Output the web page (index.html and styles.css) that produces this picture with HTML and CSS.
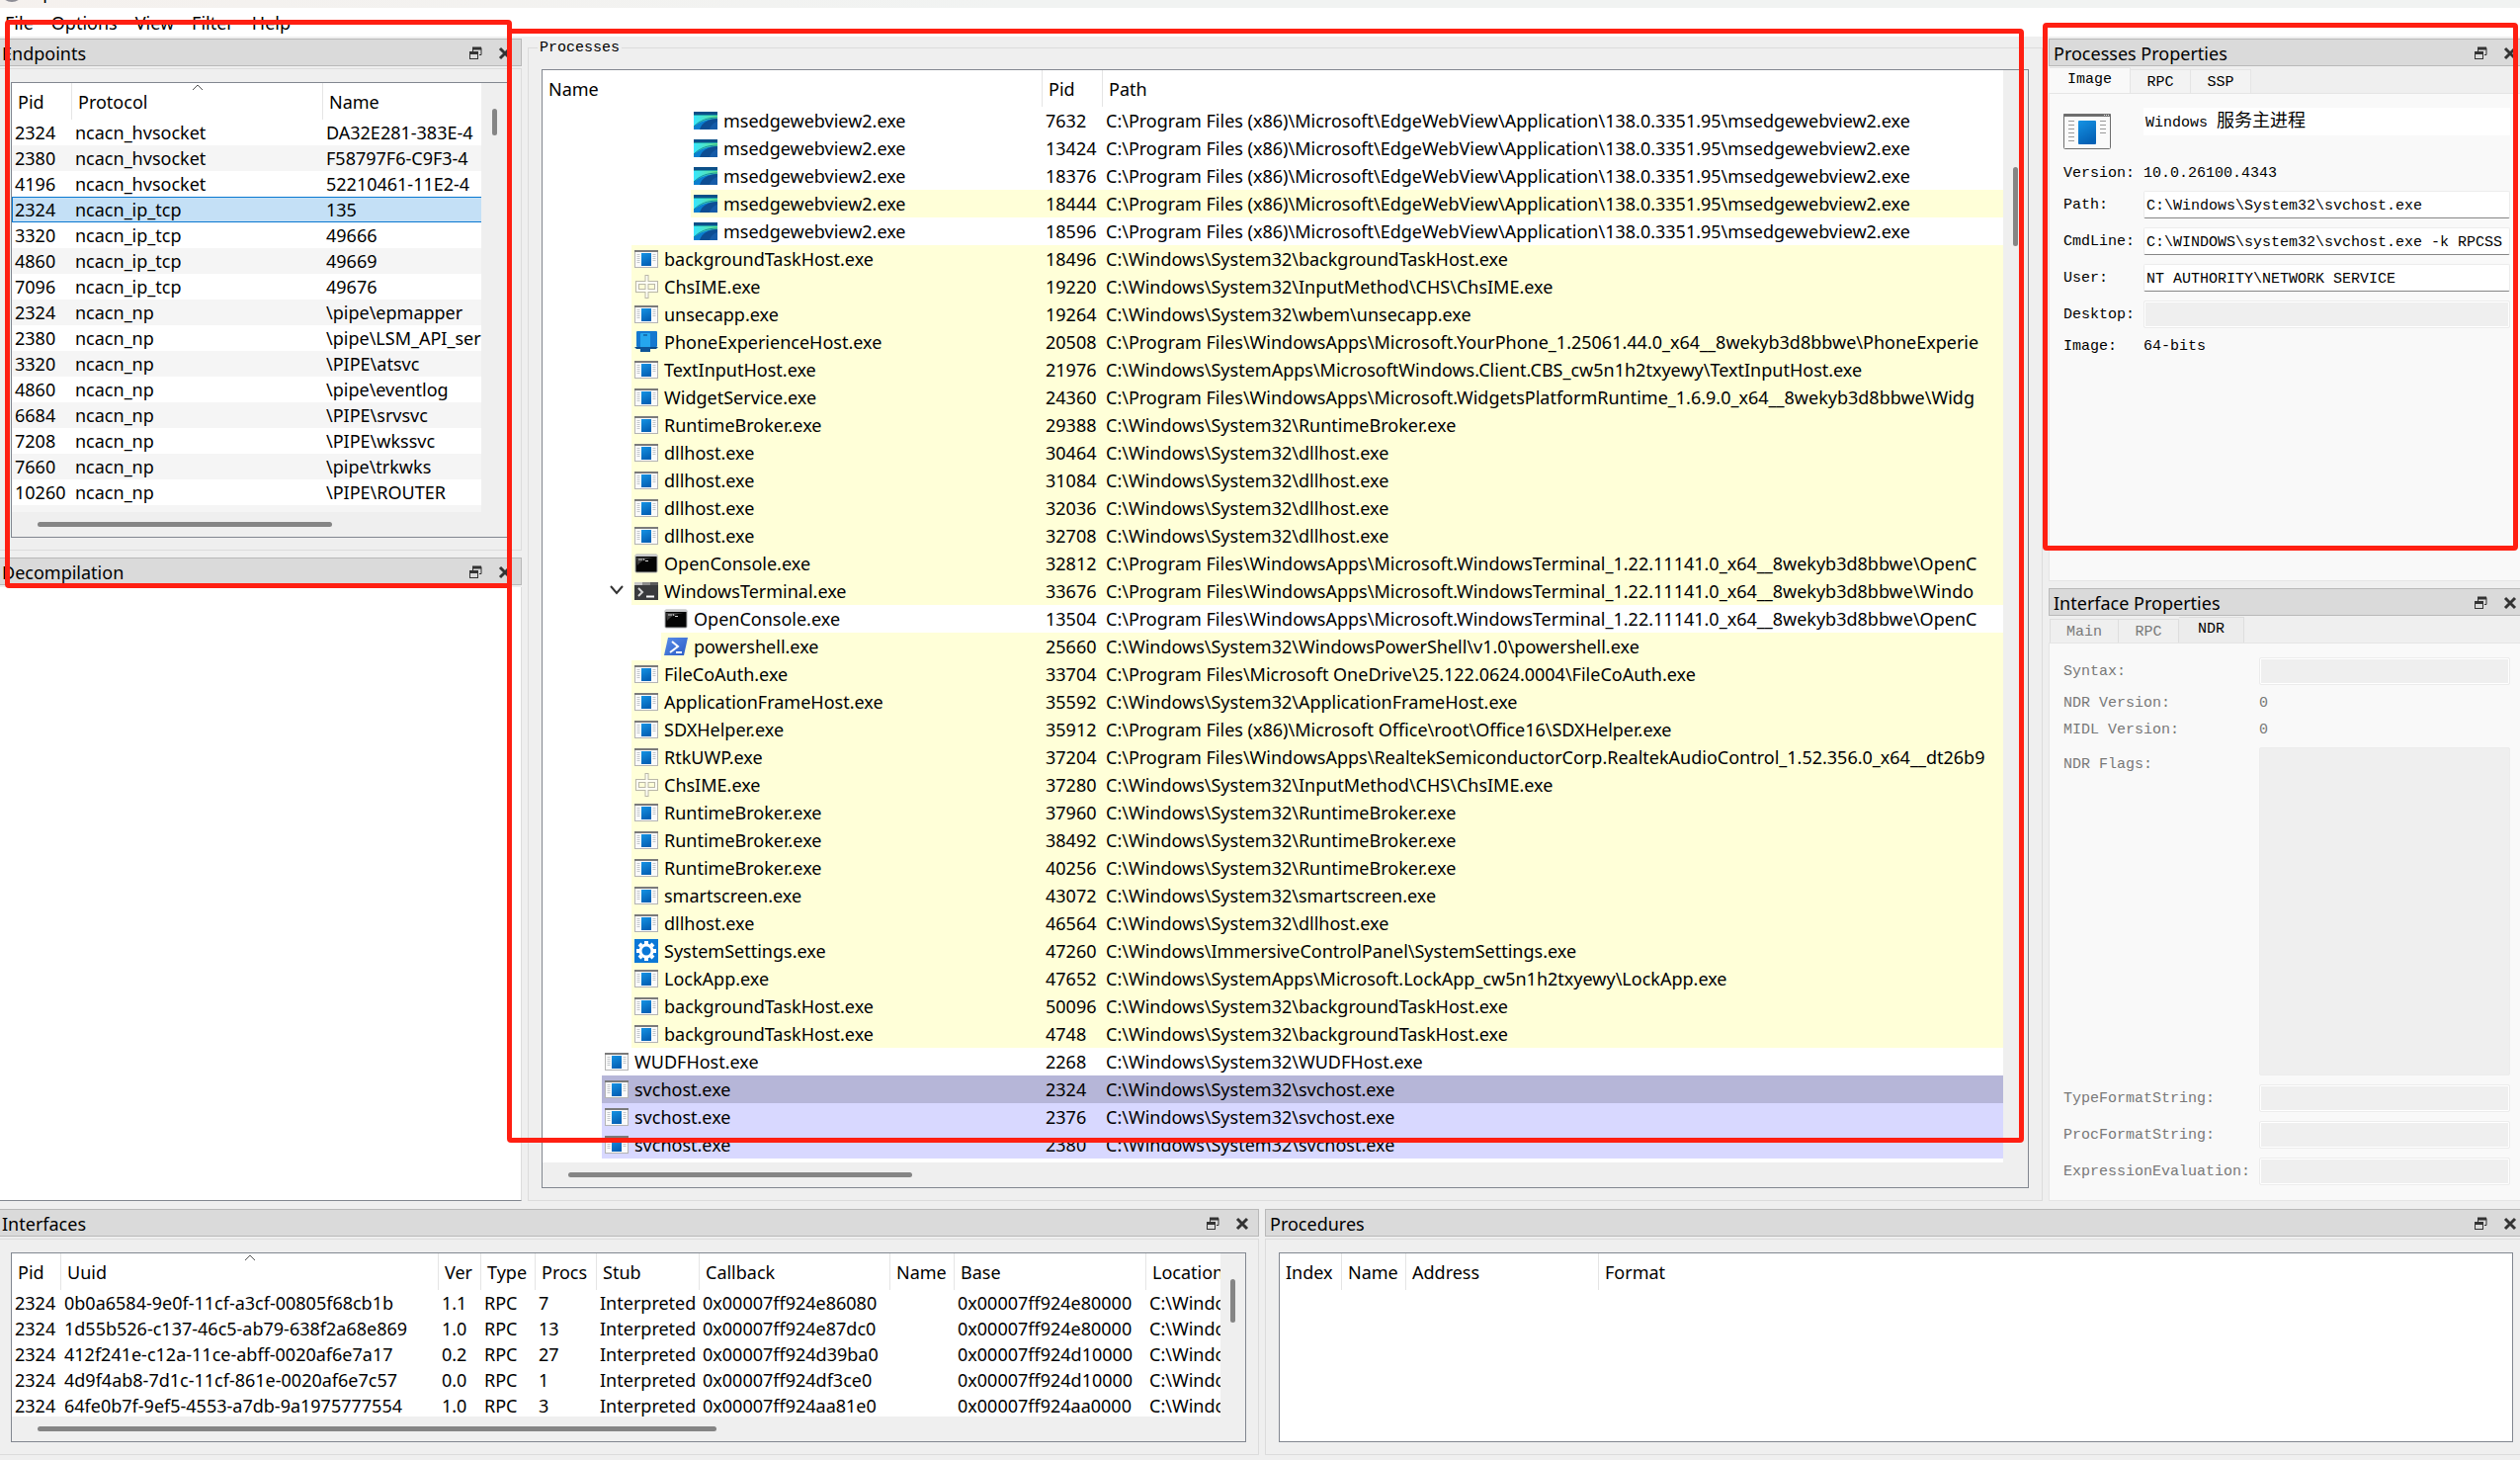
FILE: index.html
```html
<!DOCTYPE html>
<html lang="en">
<head>
<meta charset="utf-8">
<title>RpcView</title>
<link rel="stylesheet" href="styles.css">
</head>
<body>
<svg class="sprite" aria-hidden="true">
  <defs>
    <linearGradient id="g-blue" x1="0" y1="0" x2="0.4" y2="1"><stop offset="0" stop-color="#1593e4"/><stop offset="1" stop-color="#0562b6"/></linearGradient>
    <linearGradient id="g-sky" x1="0" y1="0" x2="1" y2="0"><stop offset="0" stop-color="#38e6ff"/><stop offset="1" stop-color="#62e08a"/></linearGradient>
    <linearGradient id="g-ps" x1="0" y1="0" x2="1" y2="1"><stop offset="0" stop-color="#5a8eea"/><stop offset="1" stop-color="#2a5bc4"/></linearGradient>
  </defs>
  <symbol id="i-app" viewBox="0 0 24 24">
    <rect x="0.5" y="3.5" width="23" height="17" fill="#fafafa" stroke="#b4b4b4"/>
    <path d="M0 4h24" stroke="#7a7a7a" stroke-width="2"/>
    <path d="M2.500 7.500h3M2.500 9.500h3M2.500 11.500h3M2.500 13.500h3M2.500 15.500h3M18.500 7.500h3M18.500 9.500h3M18.500 11.500h3M18.500 13.500h3" stroke="#c4c8cc"/>
    <rect x="7" y="6" width="10" height="13" fill="url(#g-blue)"/>
  </symbol>
  <symbol id="i-app-big" viewBox="0 0 48 48">
    <rect x="0.500" y="6.500" width="47" height="35" rx="1" fill="#fafafa" stroke="#6e6e6e"/>
    <rect y="6" width="48" height="3" rx="1" fill="#6e6e6e"/>
    <path d="M41 7.500h1M43 7.500h1M45 7.500h1" stroke="#e8e8e8"/>
    <path d="M5 13.500h6M5 17.500h6M5 21.500h6M5 25.500h6M5 29.500h6M5 33.500h6M37 13.500h6M37 17.500h6M37 21.500h6M37 25.500h6" stroke="#9a9a9a"/>
    <rect x="15" y="13" width="18" height="24" rx="1" fill="url(#g-blue)"/>
  </symbol>
  <symbol id="i-edge" viewBox="0 0 24 24">
    <rect y="3" width="24" height="18" fill="#0a7fd0"/>
    <rect y="3" width="24" height="3" fill="#0b4f88"/>
    <path d="M0 6h24v4C14 10 6 13 0 18z" fill="url(#g-sky)"/>
    <path d="M0 6h24v1H0z" fill="#1da0a8"/>
    <path d="M6 21C8 14 15 10 24 10v11z" fill="#0d4d93"/>
    <path d="M0 18C6 12 14 9 24 9" fill="none" stroke="#128a9c"/>
    <path d="M16 21c1-4 4-7 8-8v8z" fill="#155ba8"/>
  </symbol>
  <symbol id="i-ime" viewBox="0 0 24 24">
    <path d="M12.500 0v24M3 8h19v8H3z" fill="none" stroke="#b9b7a8" stroke-width="4"/>
    <path d="M12.500 1v22M3 8h19v8H3z" fill="none" stroke="#fffff4" stroke-width="2"/>
  </symbol>
  <symbol id="i-phone" viewBox="0 0 24 24">
    <rect x="2" y="1" width="21" height="16" rx="1" fill="#1478cf"/>
    <path d="M0 17h24l-2 2H2z" fill="#0b4a86"/>
    <rect x="6" y="3" width="10" height="19" rx="1" fill="#25a7ee"/>
    <rect x="6" y="17" width="10" height="5" fill="#0d5598"/>
    <path d="M9 5h4" stroke="#083f78" stroke-width="1"/>
  </symbol>
  <symbol id="i-console" viewBox="0 0 24 24">
    <rect x="1" y="3" width="22" height="18" rx="1" fill="#050505" stroke="#a9aaac"/>
    <path d="M1 4h22" stroke="#c9cacc" stroke-width="2"/>
    <path d="M3 14C8 8 15 6 22 6H2z" fill="#3b3b3b"/>
    <path d="M4 8h2M7 7v2M9 7l1 2M11 9.500h3" stroke="#d8d8d8"/>
  </symbol>
  <symbol id="i-terminal" viewBox="0 0 24 24">
    <rect y="3" width="24" height="18" fill="#3a3b3d"/>
    <rect y="3" width="8" height="3" fill="#c8c8c8"/><rect x="8" y="3" width="8" height="3" fill="#8b8b8b"/><rect x="16" y="3" width="8" height="3" fill="#5c5c5c"/>
    <path d="M4 9l4 4-4 4" fill="none" stroke="#d6d6d6" stroke-width="2"/>
    <path d="M12 17.500h8" stroke="#fff" stroke-width="2"/>
  </symbol>
  <symbol id="i-ps" viewBox="0 0 24 24">
    <path d="M4 3h20l-4 18H0z" fill="url(#g-ps)"/>
    <path d="M8 7l6 5-8 6M12 18h6" fill="none" stroke="#fff" stroke-width="2"/>
  </symbol>
  <symbol id="i-gear" viewBox="0 0 24 24">
    <rect width="24" height="24" fill="#0a78d7"/>
    <circle cx="12" cy="12" r="6" fill="none" stroke="#fff" stroke-width="3"/>
    <path d="M12 2v3M12 19v3M2 12h3M19 12h3M5 5l2 2M17 17l2 2M5 19l2-2M17 7l2-2" stroke="#fff" stroke-width="4"/>
  </symbol>
  <symbol id="i-float" viewBox="0 0 14 14">
    <path d="M4 1.500h9v7h-2" fill="none" stroke="#333"/><path d="M4 2h9" stroke="#333" stroke-width="3"/><path d="M4.500 1v4" stroke="#333"/>
    <rect x="1.500" y="5.500" width="8" height="7" fill="#dadada" stroke="#333"/><path d="M1 6.500h9" stroke="#333" stroke-width="3"/>
  </symbol>
  <symbol id="i-close" viewBox="0 0 14 14"><path d="M2 2l10 10M12 2L2 12" stroke="#333" stroke-width="3"/></symbol>
  <symbol id="i-sort" viewBox="0 0 12 7"><path d="M1 6l5-5 5 5" fill="none" stroke="#555"/></symbol>
  <symbol id="i-chevron" viewBox="0 0 14 10"><path d="M1 1l6 7 6-7" fill="none" stroke="#333" stroke-width="2"/></symbol>
</svg>

<header class="titlebar"><span class="titlebar-icon"></span><span class="titlebar-text">RpcView</span></header>
<nav class="menu">
  <button>File</button><button>Options</button><button>View</button><button>Filter</button><button>Help</button>
</nav>

<main class="workspace">
  <div class="column">
    <section class="dock">
      <header class="dock-title"><h2>Endpoints</h2><button aria-label="Float"><svg><use href="#i-float"/></svg></button><button aria-label="Close"><svg><use href="#i-close"/></svg></button></header>
      <div class="frame">
        <div class="grid-view endpoints">
          <div class="viewport">
            <table class="striped">
              <colgroup><col class="c-pid"><col class="c-protocol"><col></colgroup>
              <thead><tr><th>Pid</th><th>Protocol<svg class="sort"><use href="#i-sort"/></svg></th><th>Name</th></tr></thead>
              <tbody>
                <tr><td>2324</td><td>ncacn_hvsocket</td><td>DA32E281-383E-4</td></tr>
                <tr><td>2380</td><td>ncacn_hvsocket</td><td>F58797F6-C9F3-4</td></tr>
                <tr><td>4196</td><td>ncacn_hvsocket</td><td>52210461-11E2-4</td></tr>
                <tr class="selected"><td>2324</td><td>ncacn_ip_tcp</td><td>135</td></tr>
                <tr><td>3320</td><td>ncacn_ip_tcp</td><td>49666</td></tr>
                <tr><td>4860</td><td>ncacn_ip_tcp</td><td>49669</td></tr>
                <tr><td>7096</td><td>ncacn_ip_tcp</td><td>49676</td></tr>
                <tr><td>2324</td><td>ncacn_np</td><td>\pipe\epmapper</td></tr>
                <tr><td>2380</td><td>ncacn_np</td><td>\pipe\LSM_API_ser</td></tr>
                <tr><td>3320</td><td>ncacn_np</td><td>\PIPE\atsvc</td></tr>
                <tr><td>4860</td><td>ncacn_np</td><td>\pipe\eventlog</td></tr>
                <tr><td>6684</td><td>ncacn_np</td><td>\PIPE\srvsvc</td></tr>
                <tr><td>7208</td><td>ncacn_np</td><td>\PIPE\wkssvc</td></tr>
                <tr><td>7660</td><td>ncacn_np</td><td>\pipe\trkwks</td></tr>
                <tr><td>10260</td><td>ncacn_np</td><td>\PIPE\ROUTER</td></tr>
                <tr><td></td><td></td><td></td></tr>
              </tbody>
            </table>
          </div>
          <div class="vscroll"><span class="thumb"></span></div>
          <div class="hscroll"><span class="thumb"></span></div>
        </div>
      </div>
    </section>
    <section class="dock grow">
      <header class="dock-title"><h2>Decompilation</h2><button aria-label="Float"><svg><use href="#i-float"/></svg></button><button aria-label="Close"><svg><use href="#i-close"/></svg></button></header>
      <div class="source"></div>
    </section>
  </div>

  <fieldset class="group">
    <legend>Processes</legend>
    <div class="grid-view processes">
      <div class="viewport">
        <table class="tree">
          <colgroup><col class="c-name"><col class="c-pid5"><col></colgroup>
          <thead><tr><th>Name</th><th>Pid</th><th>Path</th></tr></thead>
          <tbody>
            <tr><td class="l3"><div class="proc"><svg><use href="#i-edge"/></svg>msedgewebview2.exe</div></td><td>7632</td><td>C:\Program Files (x86)\Microsoft\EdgeWebView\Application\138.0.3351.95\msedgewebview2.exe</td></tr>
            <tr><td class="l3"><div class="proc"><svg><use href="#i-edge"/></svg>msedgewebview2.exe</div></td><td>13424</td><td>C:\Program Files (x86)\Microsoft\EdgeWebView\Application\138.0.3351.95\msedgewebview2.exe</td></tr>
            <tr><td class="l3"><div class="proc"><svg><use href="#i-edge"/></svg>msedgewebview2.exe</div></td><td>18376</td><td>C:\Program Files (x86)\Microsoft\EdgeWebView\Application\138.0.3351.95\msedgewebview2.exe</td></tr>
            <tr class="own"><td class="l3"><div class="proc"><svg><use href="#i-edge"/></svg>msedgewebview2.exe</div></td><td>18444</td><td>C:\Program Files (x86)\Microsoft\EdgeWebView\Application\138.0.3351.95\msedgewebview2.exe</td></tr>
            <tr><td class="l3"><div class="proc"><svg><use href="#i-edge"/></svg>msedgewebview2.exe</div></td><td>18596</td><td>C:\Program Files (x86)\Microsoft\EdgeWebView\Application\138.0.3351.95\msedgewebview2.exe</td></tr>
            <tr class="own"><td class="l1"><div class="proc"><svg><use href="#i-app"/></svg>backgroundTaskHost.exe</div></td><td>18496</td><td>C:\Windows\System32\backgroundTaskHost.exe</td></tr>
            <tr class="own"><td class="l1"><div class="proc"><svg><use href="#i-ime"/></svg>ChsIME.exe</div></td><td>19220</td><td>C:\Windows\System32\InputMethod\CHS\ChsIME.exe</td></tr>
            <tr class="own"><td class="l1"><div class="proc"><svg><use href="#i-app"/></svg>unsecapp.exe</div></td><td>19264</td><td>C:\Windows\System32\wbem\unsecapp.exe</td></tr>
            <tr class="own"><td class="l1"><div class="proc"><svg><use href="#i-phone"/></svg>PhoneExperienceHost.exe</div></td><td>20508</td><td>C:\Program Files\WindowsApps\Microsoft.YourPhone_1.25061.44.0_x64__8wekyb3d8bbwe\PhoneExperie</td></tr>
            <tr class="own"><td class="l1"><div class="proc"><svg><use href="#i-app"/></svg>TextInputHost.exe</div></td><td>21976</td><td>C:\Windows\SystemApps\MicrosoftWindows.Client.CBS_cw5n1h2txyewy\TextInputHost.exe</td></tr>
            <tr class="own"><td class="l1"><div class="proc"><svg><use href="#i-app"/></svg>WidgetService.exe</div></td><td>24360</td><td>C:\Program Files\WindowsApps\Microsoft.WidgetsPlatformRuntime_1.6.9.0_x64__8wekyb3d8bbwe\Widg</td></tr>
            <tr class="own"><td class="l1"><div class="proc"><svg><use href="#i-app"/></svg>RuntimeBroker.exe</div></td><td>29388</td><td>C:\Windows\System32\RuntimeBroker.exe</td></tr>
            <tr class="own"><td class="l1"><div class="proc"><svg><use href="#i-app"/></svg>dllhost.exe</div></td><td>30464</td><td>C:\Windows\System32\dllhost.exe</td></tr>
            <tr class="own"><td class="l1"><div class="proc"><svg><use href="#i-app"/></svg>dllhost.exe</div></td><td>31084</td><td>C:\Windows\System32\dllhost.exe</td></tr>
            <tr class="own"><td class="l1"><div class="proc"><svg><use href="#i-app"/></svg>dllhost.exe</div></td><td>32036</td><td>C:\Windows\System32\dllhost.exe</td></tr>
            <tr class="own"><td class="l1"><div class="proc"><svg><use href="#i-app"/></svg>dllhost.exe</div></td><td>32708</td><td>C:\Windows\System32\dllhost.exe</td></tr>
            <tr class="own"><td class="l1"><div class="proc"><svg><use href="#i-console"/></svg>OpenConsole.exe</div></td><td>32812</td><td>C:\Program Files\WindowsApps\Microsoft.WindowsTerminal_1.22.11141.0_x64__8wekyb3d8bbwe\OpenC</td></tr>
            <tr class="own"><td class="l1"><div class="proc"><button class="expander" aria-label="Collapse"><svg><use href="#i-chevron"/></svg></button><svg><use href="#i-terminal"/></svg>WindowsTerminal.exe</div></td><td>33676</td><td>C:\Program Files\WindowsApps\Microsoft.WindowsTerminal_1.22.11141.0_x64__8wekyb3d8bbwe\Windo</td></tr>
            <tr><td class="l2"><div class="proc"><svg><use href="#i-console"/></svg>OpenConsole.exe</div></td><td>13504</td><td>C:\Program Files\WindowsApps\Microsoft.WindowsTerminal_1.22.11141.0_x64__8wekyb3d8bbwe\OpenC</td></tr>
            <tr class="own"><td class="l2"><div class="proc"><svg><use href="#i-ps"/></svg>powershell.exe</div></td><td>25660</td><td>C:\Windows\System32\WindowsPowerShell\v1.0\powershell.exe</td></tr>
            <tr class="own"><td class="l1"><div class="proc"><svg><use href="#i-app"/></svg>FileCoAuth.exe</div></td><td>33704</td><td>C:\Program Files\Microsoft OneDrive\25.122.0624.0004\FileCoAuth.exe</td></tr>
            <tr class="own"><td class="l1"><div class="proc"><svg><use href="#i-app"/></svg>ApplicationFrameHost.exe</div></td><td>35592</td><td>C:\Windows\System32\ApplicationFrameHost.exe</td></tr>
            <tr class="own"><td class="l1"><div class="proc"><svg><use href="#i-app"/></svg>SDXHelper.exe</div></td><td>35912</td><td>C:\Program Files (x86)\Microsoft Office\root\Office16\SDXHelper.exe</td></tr>
            <tr class="own"><td class="l1"><div class="proc"><svg><use href="#i-app"/></svg>RtkUWP.exe</div></td><td>37204</td><td>C:\Program Files\WindowsApps\RealtekSemiconductorCorp.RealtekAudioControl_1.52.356.0_x64__dt26b9</td></tr>
            <tr class="own"><td class="l1"><div class="proc"><svg><use href="#i-ime"/></svg>ChsIME.exe</div></td><td>37280</td><td>C:\Windows\System32\InputMethod\CHS\ChsIME.exe</td></tr>
            <tr class="own"><td class="l1"><div class="proc"><svg><use href="#i-app"/></svg>RuntimeBroker.exe</div></td><td>37960</td><td>C:\Windows\System32\RuntimeBroker.exe</td></tr>
            <tr class="own"><td class="l1"><div class="proc"><svg><use href="#i-app"/></svg>RuntimeBroker.exe</div></td><td>38492</td><td>C:\Windows\System32\RuntimeBroker.exe</td></tr>
            <tr class="own"><td class="l1"><div class="proc"><svg><use href="#i-app"/></svg>RuntimeBroker.exe</div></td><td>40256</td><td>C:\Windows\System32\RuntimeBroker.exe</td></tr>
            <tr class="own"><td class="l1"><div class="proc"><svg><use href="#i-app"/></svg>smartscreen.exe</div></td><td>43072</td><td>C:\Windows\System32\smartscreen.exe</td></tr>
            <tr class="own"><td class="l1"><div class="proc"><svg><use href="#i-app"/></svg>dllhost.exe</div></td><td>46564</td><td>C:\Windows\System32\dllhost.exe</td></tr>
            <tr class="own"><td class="l1"><div class="proc"><svg><use href="#i-gear"/></svg>SystemSettings.exe</div></td><td>47260</td><td>C:\Windows\ImmersiveControlPanel\SystemSettings.exe</td></tr>
            <tr class="own"><td class="l1"><div class="proc"><svg><use href="#i-app"/></svg>LockApp.exe</div></td><td>47652</td><td>C:\Windows\SystemApps\Microsoft.LockApp_cw5n1h2txyewy\LockApp.exe</td></tr>
            <tr class="own"><td class="l1"><div class="proc"><svg><use href="#i-app"/></svg>backgroundTaskHost.exe</div></td><td>50096</td><td>C:\Windows\System32\backgroundTaskHost.exe</td></tr>
            <tr class="own"><td class="l1"><div class="proc"><svg><use href="#i-app"/></svg>backgroundTaskHost.exe</div></td><td>4748</td><td>C:\Windows\System32\backgroundTaskHost.exe</td></tr>
            <tr><td class="l0"><div class="proc"><svg><use href="#i-app"/></svg>WUDFHost.exe</div></td><td>2268</td><td>C:\Windows\System32\WUDFHost.exe</td></tr>
            <tr class="service current"><td class="l0"><div class="proc"><svg><use href="#i-app"/></svg>svchost.exe</div></td><td>2324</td><td>C:\Windows\System32\svchost.exe</td></tr>
            <tr class="service"><td class="l0"><div class="proc"><svg><use href="#i-app"/></svg>svchost.exe</div></td><td>2376</td><td>C:\Windows\System32\svchost.exe</td></tr>
            <tr class="service"><td class="l0"><div class="proc"><svg><use href="#i-app"/></svg>svchost.exe</div></td><td>2380</td><td>C:\Windows\System32\svchost.exe</td></tr>
          </tbody>
        </table>
      </div>
      <div class="vscroll"><span class="thumb"></span></div>
      <div class="hscroll"><span class="thumb"></span></div>
    </div>
  </fieldset>

  <div class="column">
    <section class="dock edge properties">
      <header class="dock-title"><h2>Processes Properties</h2><button aria-label="Float"><svg><use href="#i-float"/></svg></button><button aria-label="Close"><svg><use href="#i-close"/></svg></button></header>
      <div class="tabs" role="tablist"><button role="tab" class="active wide" aria-selected="true">Image</button><button role="tab">RPC</button><button role="tab">SSP</button></div>
      <div class="pane form">
        <svg class="big-icon"><use href="#i-app-big"/></svg><p class="description">Windows <span lang="zh-CN">服务主进程</span></p>
        <span class="line">Version:</span><span class="line">10.0.26100.4343</span>
        <label for="path">Path:</label><input id="path" readonly value="C:\Windows\System32\svchost.exe">
        <label for="cmd">CmdLine:</label><input id="cmd" readonly value="C:\WINDOWS\system32\svchost.exe -k RPCSS">
        <label for="user">User:</label><input id="user" readonly value="NT AUTHORITY\NETWORK SERVICE">
        <label for="desktop">Desktop:</label><input id="desktop" disabled>
        <span class="line">Image:</span><span class="line">64-bits</span>
      </div>
    </section>
    <section class="dock edge grow">
      <header class="dock-title"><h2>Interface Properties</h2><button aria-label="Float"><svg><use href="#i-float"/></svg></button><button aria-label="Close"><svg><use href="#i-close"/></svg></button></header>
      <div class="tabs off" role="tablist"><button role="tab" class="mid">Main</button><button role="tab">RPC</button><button role="tab" class="active" aria-selected="true">NDR</button></div>
      <div class="pane form ndr">
        <label for="syntax">Syntax:</label><input id="syntax" disabled>
        <span class="line">NDR Version:</span><span class="line">0</span>
        <span class="line">MIDL Version:</span><span class="line">0</span>
        <label for="flags" class="top">NDR Flags:</label><textarea id="flags" disabled></textarea>
        <label for="tfs">TypeFormatString:</label><input id="tfs" disabled>
        <label for="pfs">ProcFormatString:</label><input id="pfs" disabled>
        <label for="eval">ExpressionEvaluation:</label><input id="eval" disabled>
      </div>
    </section>
  </div>
</main>

<div class="lower">
  <section class="dock">
    <header class="dock-title"><h2>Interfaces</h2><button aria-label="Float"><svg><use href="#i-float"/></svg></button><button aria-label="Close"><svg><use href="#i-close"/></svg></button></header>
    <div class="frame">
      <div class="grid-view interfaces">
        <div class="viewport">
          <table>
            <colgroup><col class="c-pid4"><col class="c-uuid"><col class="c-ver"><col class="c-type"><col class="c-procs"><col class="c-stub"><col class="c-addr"><col class="c-short"><col class="c-base"><col></colgroup>
            <thead><tr><th>Pid</th><th>Uuid<svg class="sort"><use href="#i-sort"/></svg></th><th>Ver</th><th>Type</th><th>Procs</th><th>Stub</th><th>Callback</th><th>Name</th><th>Base</th><th>Location</th></tr></thead>
            <tbody>
              <tr><td>2324</td><td>0b0a6584-9e0f-11cf-a3cf-00805f68cb1b</td><td>1.1</td><td>RPC</td><td>7</td><td>Interpreted</td><td>0x00007ff924e86080</td><td></td><td>0x00007ff924e80000</td><td>C:\Windo</td></tr>
              <tr><td>2324</td><td>1d55b526-c137-46c5-ab79-638f2a68e869</td><td>1.0</td><td>RPC</td><td>13</td><td>Interpreted</td><td>0x00007ff924e87dc0</td><td></td><td>0x00007ff924e80000</td><td>C:\Windo</td></tr>
              <tr><td>2324</td><td>412f241e-c12a-11ce-abff-0020af6e7a17</td><td>0.2</td><td>RPC</td><td>27</td><td>Interpreted</td><td>0x00007ff924d39ba0</td><td></td><td>0x00007ff924d10000</td><td>C:\Windo</td></tr>
              <tr><td>2324</td><td>4d9f4ab8-7d1c-11cf-861e-0020af6e7c57</td><td>0.0</td><td>RPC</td><td>1</td><td>Interpreted</td><td>0x00007ff924df3ce0</td><td></td><td>0x00007ff924d10000</td><td>C:\Windo</td></tr>
              <tr><td>2324</td><td>64fe0b7f-9ef5-4553-a7db-9a1975777554</td><td>1.0</td><td>RPC</td><td>3</td><td>Interpreted</td><td>0x00007ff924aa81e0</td><td></td><td>0x00007ff924aa0000</td><td>C:\Windo</td></tr>
            </tbody>
          </table>
        </div>
        <div class="vscroll"><span class="thumb"></span></div>
        <div class="hscroll"><span class="thumb"></span></div>
      </div>
    </div>
  </section>
  <section class="dock edge">
    <header class="dock-title"><h2>Procedures</h2><button aria-label="Float"><svg><use href="#i-float"/></svg></button><button aria-label="Close"><svg><use href="#i-close"/></svg></button></header>
    <div class="frame">
      <div class="grid-view procedures">
        <table>
          <colgroup><col class="c-index"><col class="c-short"><col class="c-address"><col></colgroup>
          <thead><tr><th>Index</th><th>Name</th><th>Address</th><th>Format</th></tr></thead>
        </table>
      </div>
    </div>
  </section>
</div>

<div class="mark mark-endpoints"></div>
<div class="mark mark-processes"></div>
<div class="mark mark-properties"></div>
</body>
</html>
```

FILE: styles.css
```css
* { box-sizing: border-box; }

body {
  margin: 0;
  position: relative;
  min-height: 100vh;
  overflow-x: hidden;
  background: #efefef;
  color: #000;
  font: 18px/24px "Noto Sans", "Open Sans", sans-serif;
}

button, input, textarea { font: inherit; color: inherit; }
h2, p { margin: 0; font: inherit; }
.sprite { position: absolute; width: 0; height: 0; }

/* Window chrome */
.titlebar {
  display: flex;
  align-items: flex-end;
  gap: 8px;
  height: 8px;
  overflow: hidden;
  background: linear-gradient(90deg, #f5f1ee, #f1f3f2 40%);
}
.titlebar-icon { width: 24px; height: 24px; margin-bottom: 6px; border-radius: 50%; background: #8d8d95; }
.titlebar-text { margin-bottom: 4px; line-height: 24px; }

.menu { display: flex; gap: 18px; height: 29px; padding: 2px 5px 0; background: #fff; }
.menu button { border: 0; padding: 0; background: none; line-height: 27px; }

/* Dock layout */
.workspace {
  display: grid;
  grid-template-columns: 528px minmax(0, 1fr) 477px;
  gap: 6px;
  padding-top: 2px;
}
.workspace > * { min-width: 0; }
.column { display: flex; flex-direction: column; gap: 7px; }
.lower {
  display: grid;
  grid-template-columns: minmax(0, 1274fr) minmax(0, 1270fr);
  gap: 6px;
  padding: 8px 0 4px;
}
.dock { display: flex; flex-direction: column; gap: 2px; min-width: 0; }
.grow { flex: 1; }

.dock-title {
  display: flex;
  align-items: center;
  height: 28px;
  padding: 2px 9px 0 2px;
  border: 1px solid #b9b9b9;
  border-left: 0;
  background: #dadada;
}
.dock-title h2 { flex: 1; }
.dock-title button { display: flex; margin-left: 16px; border: 0; padding: 0; background: none; }
.dock-title svg { width: 14px; height: 14px; }
.edge .dock-title { padding: 2px 3px 0 4px; border-left: 1px solid #b9b9b9; border-right: 0; }

.frame { flex: 1; padding: 13px 12px 12px 11px; border: 1px solid #dcdcdc; border-left: 0; }
.edge .frame { padding: 13px 7px 12px 13px; border-left: 1px solid #dcdcdc; border-right: 0; }
.source { flex: 1; border-right: 1px solid #dcdcdc; border-bottom: 1px solid #828790; background: #fff; }

.group { margin: 0; padding: 13px 13px 12px; border: 1px solid #dcdcdc; }
.group legend { margin-left: -4px; padding: 2px 2px 0; font: 15px/16px "Liberation Mono", monospace; }

/* Scrolling tables */
.grid-view {
  display: grid;
  grid-template-columns: minmax(0, 1fr) 25px;
  grid-template-rows: minmax(0, 1fr) 25px;
  border: 1px solid #828790;
  background: #efefef;
}
.viewport { overflow: hidden; background: #fff; }
.vscroll { display: flex; justify-content: center; }
.hscroll { display: flex; align-items: center; grid-column: 1 / 3; }
.thumb { border-radius: 3px; background: #858585; }
.vscroll .thumb { width: 5px; }
.hscroll .thumb { height: 5px; }

.endpoints { grid-template-columns: minmax(0, 1fr) 27px; height: 461px; }
.endpoints .vscroll .thumb { height: 27px; margin-top: 26px; }
.endpoints .hscroll .thumb { width: 298px; margin-left: 26px; }
.processes .viewport { padding-bottom: 4px; }
.processes .vscroll .thumb { height: 80px; margin-top: 98px; }
.processes .hscroll .thumb { width: 348px; margin-left: 26px; }
.interfaces, .procedures { height: 192px; }
.interfaces .vscroll .thumb { height: 44px; margin-top: 26px; }
.interfaces .hscroll .thumb { width: 687px; margin-left: 26px; }
.procedures { display: block; background: #fff; }

table { width: 100%; table-layout: fixed; border-collapse: separate; border-spacing: 0; }
th, td { padding: 0 0 0 3px; overflow: hidden; white-space: nowrap; text-align: left; font-weight: normal; }
th { position: relative; height: 37px; padding-left: 6px; border-right: 1px solid #e5e5e5; }
th:last-child { border-right: 0; }
td { height: 26px; }
.sort { position: absolute; top: 1px; left: 50%; width: 12px; height: 7px; margin-left: -6px; }

.c-pid { width: 61px; }
.c-protocol { width: 254px; }
.c-name { width: 506px; }
.c-pid5 { width: 61px; }
.c-pid4 { width: 50px; }
.c-uuid { width: 382px; }
.c-ver { width: 43px; }
.c-type { width: 55px; }
.c-procs { width: 62px; }
.c-stub { width: 104px; }
.c-addr { width: 193px; }
.c-short { width: 65px; }
.c-base { width: 194px; }
.c-index { width: 63px; }
.c-address { width: 195px; }

.striped tbody tr:nth-child(even) { background: #f5f5f5; }
.striped tbody tr.selected td { border-top: 1px solid #0a78d0; border-bottom: 1px solid #0a78d0; background: #c4e0f6; }
.striped tbody tr.selected td:first-child { padding-left: 2px; border-left: 1px solid #0a78d0; }

/* Process tree */
.tree td { height: 28px; }
.tree .l0 { padding-left: 60px; }
.tree .l1 { padding-left: 90px; }
.tree .l2 { padding-left: 120px; }
.tree .l3 { padding-left: 150px; }
.proc { position: relative; display: flex; align-items: center; gap: 6px; height: 28px; padding-left: 3px; }
.proc > svg { width: 24px; height: 24px; }
.own td { background-color: #ffffd8; }
.service td { background-color: #d8d8ff; }
.current td { background-color: #b6b6d8; }
.tree td:first-child { overflow: visible; background-clip: content-box; }
.expander { position: absolute; left: -22px; top: 8px; display: flex; border: 0; padding: 0; background: none; }
.expander svg { width: 14px; height: 10px; }

/* Property sheets */
.properties { min-height: 549px; }
.tabs { display: flex; align-items: flex-end; height: 25px; margin-left: 1px; font: 15px/20px "Liberation Mono", monospace; }
.tabs button { width: 61px; height: 24px; border: 1px solid #e5e5e5; border-left: 0; border-bottom: 0; padding: 2px 0 0; background: #f3f3f3; }
.tabs button.wide { width: 82px; }
.tabs button.mid { width: 70px; border-left: 1px solid #e5e5e5; }
.tabs button.active { height: 26px; padding: 0 0 2px; background: #f9f9f9; }
.tabs.off { color: #787878; }
.tabs.off button { background: #efefef; border-color: #dedede; }
.tabs.off button.active { width: 66px; background: #ececec; color: #000; }

.pane {
  flex: 1;
  margin-top: -2px;
  padding: 14px 10px 15px 14px;
  border: 1px solid #e5e5e5;
  border-right: 0;
  background: #f9f9f9;
}
.form {
  display: grid;
  grid-template-columns: 81px minmax(0, 1fr);
  grid-auto-rows: min-content;
  gap: 9px 0;
  align-items: center;
  font: 15px/18px "Liberation Mono", "Noto Sans CJK SC", monospace;
}
.form label { padding-top: 2px; }
.form .line { padding-top: 2px; line-height: 16px; }
.big-icon { width: 48px; height: 48px; }
.description { align-self: start; height: 28px; padding-left: 2px; background: #fff; line-height: 28px; }
.description span { font-size: 18px; }
.form input { width: 100%; height: 28px; border: 1px solid #ececec; border-bottom-color: #868686; border-radius: 2px; padding: 2px 2px 0; background: #fff; }
.form input:disabled { border-color: #ececec; background: #efefef; box-shadow: inset 0 0 0 1px #fff; }
.form textarea { align-self: stretch; border: 1px solid #ececec; border-radius: 2px; background: #efefef; resize: none; }
.ndr { grid-template-columns: 198px minmax(0, 1fr); grid-template-rows: 28px 18px 18px minmax(60px, 1fr) 28px 28px 28px; color: #787878; }
.form .top { align-self: start; padding-top: 9px; }

/* Highlight rectangles drawn over the window */
.mark { position: absolute; border: 5px solid #ff1f12; border-radius: 4px; pointer-events: none; }
.mark-endpoints { left: 5px; top: 20px; width: 513px; height: 575px; }
.mark-processes { left: 513px; right: 502px; top: 29px; height: 1127px; }
.mark-properties { right: 2px; top: 23px; width: 481px; height: 534px; }
```
